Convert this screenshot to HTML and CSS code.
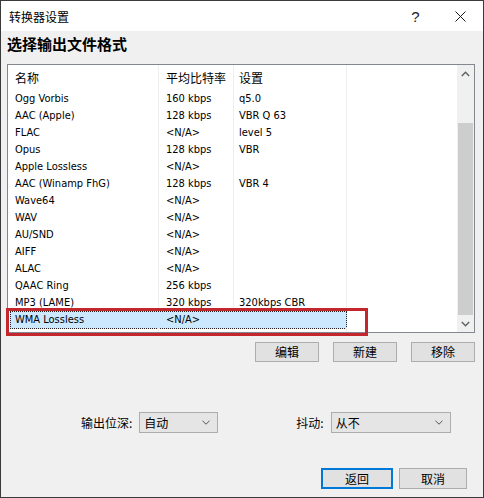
FILE: index.html
```html
<!DOCTYPE html>
<html lang="zh-CN">
<head>
<meta charset="utf-8">
<title>转换器设置</title>
<link rel="stylesheet" href="styles.css">
</head>
<body>
<div class="window">
  <div class="titlebar">
    <div class="title">转换器设置</div>
    <div class="cap help">?</div>
    <div class="cap close">
      <svg width="11" height="11" viewBox="0 0 11 11"><path d="M0.5 0.5 L10.5 10.5 M10.5 0.5 L0.5 10.5" stroke="#1a1a1a" stroke-width="1" fill="none"/></svg>
    </div>
  </div>
  <div class="body">
    <h1 class="heading">选择输出文件格式</h1>
    <div class="list">
      <div class="rows">
        <div class="row head"><span class="cell">名称</span><span class="cell">平均比特率</span><span class="cell">设置</span><span class="cell last"></span></div>
        <div class="row"><span class="cell">Ogg Vorbis</span><span class="cell">160 kbps</span><span class="cell">q5.0</span><span class="cell last"></span></div>
        <div class="row"><span class="cell">AAC (Apple)</span><span class="cell">128 kbps</span><span class="cell">VBR Q 63</span><span class="cell last"></span></div>
        <div class="row"><span class="cell">FLAC</span><span class="cell">&lt;N/A&gt;</span><span class="cell">level 5</span><span class="cell last"></span></div>
        <div class="row"><span class="cell">Opus</span><span class="cell">128 kbps</span><span class="cell">VBR</span><span class="cell last"></span></div>
        <div class="row"><span class="cell">Apple Lossless</span><span class="cell">&lt;N/A&gt;</span><span class="cell"></span><span class="cell last"></span></div>
        <div class="row"><span class="cell">AAC (Winamp FhG)</span><span class="cell">128 kbps</span><span class="cell">VBR 4</span><span class="cell last"></span></div>
        <div class="row"><span class="cell">Wave64</span><span class="cell">&lt;N/A&gt;</span><span class="cell"></span><span class="cell last"></span></div>
        <div class="row"><span class="cell">WAV</span><span class="cell">&lt;N/A&gt;</span><span class="cell"></span><span class="cell last"></span></div>
        <div class="row"><span class="cell">AU/SND</span><span class="cell">&lt;N/A&gt;</span><span class="cell"></span><span class="cell last"></span></div>
        <div class="row"><span class="cell">AIFF</span><span class="cell">&lt;N/A&gt;</span><span class="cell"></span><span class="cell last"></span></div>
        <div class="row"><span class="cell">ALAC</span><span class="cell">&lt;N/A&gt;</span><span class="cell"></span><span class="cell last"></span></div>
        <div class="row"><span class="cell">QAAC Ring</span><span class="cell">256 kbps</span><span class="cell"></span><span class="cell last"></span></div>
        <div class="row"><span class="cell">MP3 (LAME)</span><span class="cell">320 kbps</span><span class="cell">320kbps CBR</span><span class="cell last"></span></div>
        <div class="row selected">
          <div class="sel"><span class="scell">WMA Lossless</span><span class="scell">&lt;N/A&gt;</span><span class="scell"></span></div>
          <span class="cell last"></span>
        </div>
        <div class="row filler"><span class="cell"></span><span class="cell"></span><span class="cell"></span><span class="cell last"></span></div>
      </div>
      <div class="scrollbar">
        <div class="sbtn"><svg width="9" height="6" viewBox="0 0 9 6"><path d="M0.8 5 L4.5 1.3 L8.2 5" stroke="#606060" stroke-width="1.4" fill="none"/></svg></div>
        <div class="track"><div class="thumb"></div></div>
        <div class="sbtn"><svg width="9" height="6" viewBox="0 0 9 6"><path d="M0.8 1 L4.5 4.7 L8.2 1" stroke="#606060" stroke-width="1.4" fill="none"/></svg></div>
      </div>
    </div>
    <div class="actions">
      <button class="btn">编辑</button>
      <button class="btn">新建</button>
      <button class="btn">移除</button>
    </div>
    <div class="options">
      <div class="field f1">
        <span class="label">输出位深:</span>
        <div class="combo c1"><span>自动</span><svg width="8" height="5" viewBox="0 0 8 5"><path d="M0.5 0.8 L4 4.2 L7.5 0.8" stroke="#555" stroke-width="1" fill="none"/></svg></div>
      </div>
      <div class="field f2">
        <span class="label">抖动:</span>
        <div class="combo c2"><span>从不</span><svg width="8" height="5" viewBox="0 0 8 5"><path d="M0.5 0.8 L4 4.2 L7.5 0.8" stroke="#555" stroke-width="1" fill="none"/></svg></div>
      </div>
    </div>
    <div class="footer">
      <button class="btn fbtn default">返回</button>
      <button class="btn fbtn cancel">取消</button>
    </div>
  </div>
  <div class="annot"></div>
</div>
</body>
</html>
```
FILE: styles.css
```css
html, body {
  margin: 0;
  padding: 0;
  background: #f0f0f0;
}
.window {
  position: relative;
  width: 484px;
  height: 498px;
  box-sizing: border-box;
  border: 1px solid #3a3a3a;
  background: #f0f0f0;
  font-family: "DejaVu Sans Condensed", "Liberation Sans", "Noto Sans CJK SC", sans-serif;
  color: #000;
  overflow: hidden;
}
.titlebar {
  height: 30px;
  background: #fff;
  display: flex;
  align-items: center;
}
.title {
  flex: 1;
  padding-left: 8px;
  font-family: "Noto Sans CJK SC", sans-serif;
  font-size: 12px;
  color: #000;
}
.cap {
  width: 45px;
  height: 30px;
  display: flex;
  align-items: center;
  justify-content: center;
}
.help {
  font-family: "Liberation Sans", sans-serif;
  font-size: 15px;
  color: #1a1a1a;
}
.body {
  padding: 0 0 0 6px;
}
.heading {
  margin: 3px 0 10px 0;
  height: 20px;
  line-height: 20px;
  font-family: "Noto Sans CJK SC", sans-serif;
  font-weight: bold;
  font-size: 15px;
}
.list {
  width: 468px;
  height: 269px;
  box-sizing: border-box;
  border: 1px solid #828790;
  background: #fff;
  display: flex;
}
.rows {
  width: 449px;
  display: flex;
  flex-direction: column;
}
.row {
  display: grid;
  grid-template-columns: 151px 75px 113px 1fr;
  height: 17px;
  font-size: 11px;
  line-height: 18px;
}
.row.head {
  height: 25px;
  line-height: 25px;
  font-family: "Noto Sans CJK SC", sans-serif;
  font-size: 12px;
}
.cell {
  border-right: 1px solid #efefef;
  padding-left: 7px;
  white-space: nowrap;
  overflow: hidden;
}
.row .cell:nth-child(3) {
  padding-left: 5px;
}
.cell.last {
  border-right: none;
}
.row.filler {
  flex: 1;
}
.sel {
  grid-column: span 3;
  display: grid;
  grid-template-columns: 149px 75px 1fr;
  margin-left: 2px;
  background: #cce8ff;
  border: 1px dotted #222;
  box-sizing: border-box;
  line-height: 16px;
}
.scell {
  padding-left: 4px;
  white-space: nowrap;
}
.scell + .scell {
  padding-left: 6px;
}
.scrollbar {
  width: 17px;
  background: #f0f0f0;
  display: flex;
  flex-direction: column;
}
.sbtn {
  height: 17px;
  display: flex;
  align-items: center;
  justify-content: center;
}
.track {
  flex: 1;
  display: flex;
  flex-direction: column;
  padding-top: 41px;
}
.thumb {
  flex: 1;
  margin: 0 1px;
  background: #cdcdcd;
}
.actions {
  width: 468px;
  display: flex;
  justify-content: flex-end;
  gap: 14px;
  margin-top: 9px;
}
.btn {
  width: 64px;
  height: 20px;
  box-sizing: border-box;
  border: 1px solid #adadad;
  background: #e1e1e1;
  font-family: "Noto Sans CJK SC", sans-serif;
  font-size: 12px;
  color: #000;
  padding: 0;
  line-height: 18px;
}
.options {
  display: flex;
  margin-top: 50px;
  height: 21px;
  align-items: center;
}
.field {
  display: flex;
  align-items: center;
  gap: 7px;
}
.f1 {
  margin-left: 74px;
}
.f2 {
  margin-left: 78px;
}
.label {
  font-family: "Noto Sans CJK SC", sans-serif;
  font-size: 12px;
}
.combo {
  height: 21px;
  box-sizing: border-box;
  border: 1px solid #adadad;
  background: #e5e5e5;
  display: flex;
  align-items: center;
  justify-content: space-between;
  padding: 0 7px 0 4px;
  font-family: "Noto Sans CJK SC", sans-serif;
  font-size: 12px;
}
.c1 {
  width: 79px;
}
.c2 {
  width: 120px;
}
.footer {
  display: flex;
  justify-content: flex-end;
  gap: 6px;
  margin-top: 35px;
  padding-right: 16px;
}
.fbtn {
  height: 21px;
}
.default {
  width: 72px;
  border: 2px solid #0078d7;
  line-height: 17px;
}
.cancel {
  width: 68px;
}
.annot {
  position: absolute;
  left: 5px;
  top: 307px;
  width: 362px;
  height: 28px;
  box-sizing: border-box;
  border: 3px solid #c4262e;
}
```
